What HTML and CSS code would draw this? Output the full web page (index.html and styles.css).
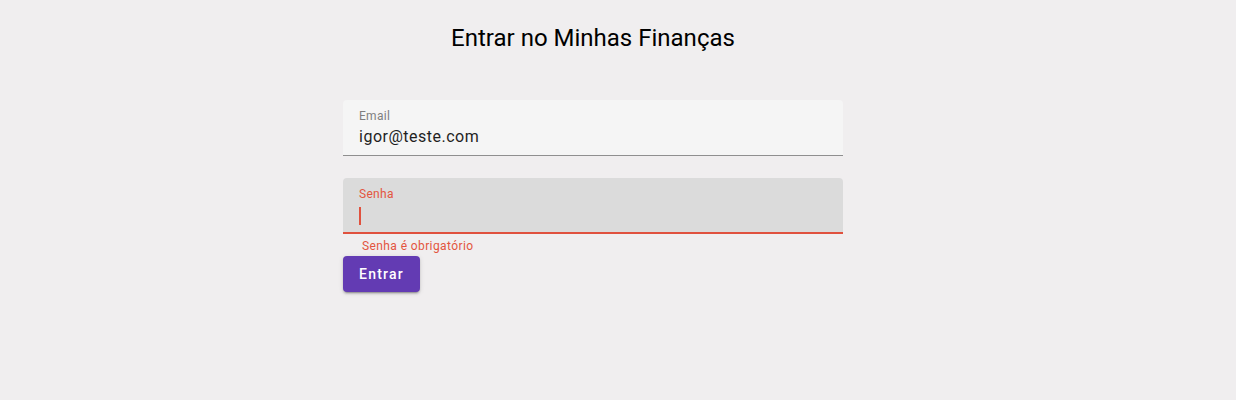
FILE: index.html
```html
<!DOCTYPE html>
<html lang="pt-BR">
<head>
<meta charset="utf-8">
<title>Entrar no Minhas Finanças</title>
<link rel="stylesheet" href="styles.css">
</head>
<body>
<main class="page">
  <h1 class="title">Entrar no Minhas Finanças</h1>
  <form class="form">
    <div class="field">
      <div class="field-box">
        <span class="field-label">Email</span>
        <span class="field-value">igor@teste.com</span>
      </div>
      <div class="field-sub"></div>
    </div>
    <div class="field field-error">
      <div class="field-box">
        <span class="field-label">Senha</span>
        <span class="field-value"><span class="caret"></span></span>
      </div>
      <div class="field-sub">Senha é obrigatório</div>
    </div>
    <div class="actions">
      <button type="button" class="btn">Entrar</button>
    </div>
  </form>
</main>
</body>
</html>
```
FILE: styles.css
```css
* { box-sizing: border-box; }
html, body { margin: 0; padding: 0; }
body {
  background: #f0eeef;
  font-family: Roboto, "Noto Sans", sans-serif;
  height: 400px;
  overflow: hidden;
}
.page {
  width: 1186px;
  display: flex;
  flex-direction: column;
  align-items: center;
}
.title {
  margin: 22px 0 0 0;
  font-size: 24px;
  font-weight: 400;
  line-height: 32px;
  color: #000;
}
.form {
  margin-top: 46px;
  width: 500px;
  display: flex;
  flex-direction: column;
}
.field-box {
  height: 56px;
  background: #f5f5f5;
  border-radius: 4px 4px 0 0;
  border-bottom: 1px solid #8f8f8f;
  padding: 9px 16px 0 16px;
  display: flex;
  flex-direction: column;
}
.field-label {
  font-size: 12px;
  line-height: 15px;
  color: #7f7f7f;
  letter-spacing: 0.3px;
}
.field-value {
  margin-top: 1px;
  font-size: 16px;
  line-height: 24px;
  color: #1f1f1f;
  letter-spacing: 0.5px;
  height: 24px;
  display: flex;
  align-items: center;
}
.field-sub {
  height: 22px;
  padding: 4px 19px 0 19px;
  font-size: 12px;
  line-height: 16px;
  letter-spacing: 0.4px;
  color: #e35540;
}
.field-error .field-box {
  background: #dbdbdb;
  border-bottom: 2px solid #e0513e;
}
.field-error .field-label { color: #e35540; }
.caret {
  display: block;
  width: 2px;
  height: 18px;
  background: #e0513e;
  margin-top: 1px;
}
.actions { display: flex; }
.btn {
  height: 36px;
  padding: 0 16px;
  border: 0;
  border-radius: 4px;
  background: #633bb3;
  color: #fff;
  font-family: Roboto, "Noto Sans", sans-serif;
  font-size: 14px;
  font-weight: 500;
  letter-spacing: 1.25px;
  box-shadow: 0 3px 1px -2px rgba(0,0,0,.2), 0 2px 2px 0 rgba(0,0,0,.14), 0 1px 5px 0 rgba(0,0,0,.12);
}
```
